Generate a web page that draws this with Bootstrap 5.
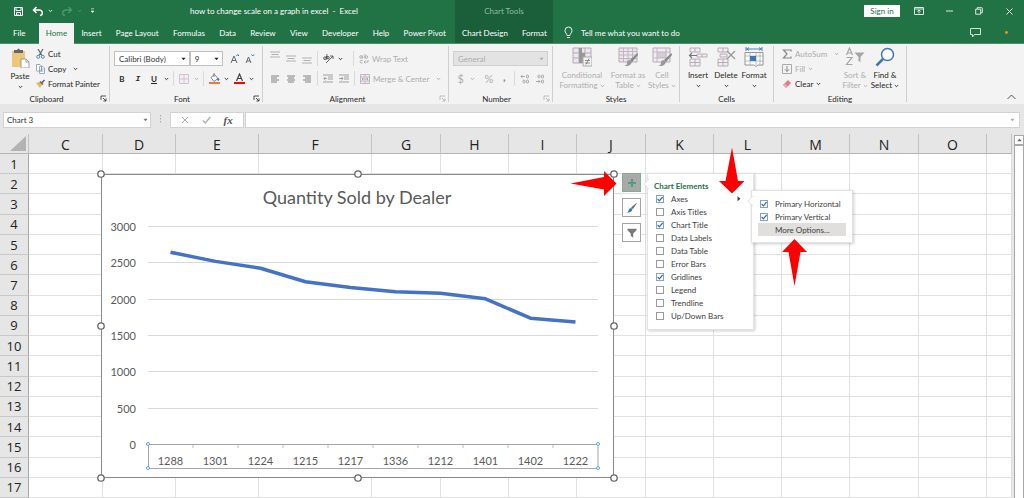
<!DOCTYPE html>
<html lang="en">
<head>
<meta charset="utf-8">
<meta name="viewport" content="width=device-width, initial-scale=1">
<title>how to change scale on a graph in excel - Excel</title>
<link href="https://cdn.jsdelivr.net/npm/bootstrap@5.3.0/dist/css/bootstrap.min.css" rel="stylesheet">
<style>
  :root { --green: #217346; --green-dark: #1b5e3a; --ribbon: #f3f3f3; --chrome: #e6e6e6; }
  body { font: 8px/10px Lato, "Open Sans", sans-serif; color: #262626; background: var(--chrome); overflow: hidden; }
  button { font: inherit; color: inherit; background: none; border: 0; padding: 0; display: inline-flex; align-items: center; justify-content: center; white-space: nowrap; }
  svg { flex: none; display: block; }

  .titlebar { height: 22px; background: var(--green); color: #fff; }
  .title-left { width: 190px; padding-left: 12px; }
  .ctx { background: var(--green-dark); width: 98px; }
  .ctx-name { color: #8fbfa3; }
  .tabs { height: 22px; background: var(--green); color: #fff; border-bottom: 1px solid #4e9069; }
  .main-tabs { width: 455px; padding-right: 2px; }
  .tabs a { color: #fff; text-decoration: none; line-height: 22px; padding: 0 7px; white-space: nowrap; }
  .tabs a.current { background: var(--ribbon); color: var(--green); height: 22px; margin-top: 1px; line-height: 20px; }
  .tabs .file-tab { padding: 0 13px; }
  .signin { background: #fff; color: var(--green); width: 36px; height: 12px; }
  .winbtn { width: 30px; height: 20px; }

  .ribbon { height: 60px; background: var(--ribbon); }
  .group { border-right: 1px solid #cfcfcf; margin-top: 2px; height: 56px; position: relative; flex: none; }
  .group-name { height: 10px; text-align: center; position: relative; }
  .group-body { height: 48px; }
  .launch { position: absolute; right: 2px; bottom: 0; }
  .ic { width: 16px; height: 15px; }
  .ch { width: 9px; height: 15px; }
  .glyph { font-size: 11px; }
  .fxlabel { font: italic bold 11px/12px "Liberation Serif", serif; color: #555; }
  .line15 { height: 15px; gap: 3px; }
  .wide { gap: 3px; padding-left: 3px; }
  .tworow { padding-top: 5px; gap: 5px; }
  .tworow > div { height: 15px; }
  .off { color: #adadad; }
  .big { flex-direction: column; justify-content: flex-start; }
  .big svg.bigicon { margin: 1px 0 3px; }
  .combo { border: 1px solid #c0c0c0; background: #fff; height: 15px; padding: 0 3px; min-width: 0; }
  .combo input, .namebox input { border: 0; background: none; padding: 0 0 0 1px; width: 100%; min-width: 0; font: inherit; color: #333; outline: 0; }
  .combo.gray { background: #e3e3e3; border-color: #d0d0d0; }
  .combo.gray input { color: #adadad; }
  .vsep { width: 1px; height: 15px; background: #dadada; margin: 0 2px; }

  .formula { height: 30px; padding: 8px 4px 7px 3px; }
  .white { background: #fff; border: 1px solid #d2d2d2; height: 16px; }
  .namebox { width: 148px; padding: 0 2px; }
  .fxbar { width: 74px; }

  .app { height: 100vh; }
  .sheetwrap { min-height: 0; position: relative; }
  .sheet { width: 1010px; height: 100%; table-layout: fixed; border-collapse: separate; border-spacing: 0; background: #fff; font: 13px/16px "Open Sans", sans-serif; color: #222; }
  .sheet th { background: var(--chrome); font-weight: 400; text-align: center; padding: 0; border-right: 1px solid #c3c3c3; border-bottom: 1px solid #b5b5b5; }
  .sheet thead th { height: 20px; font-size: 14px; padding-top: 2px; }
  .sheet tbody th { border-right-color: #a8a8a8; border-bottom-color: #c8c8c8; }
  .sheet td { padding: 0; border-right: 1px solid #e0e0e0; border-bottom: 1px solid #e0e0e0; }
  .scroll { width: 14px; padding: 1px 2px 0; }
  .scroll .btn-up { width: 10px; height: 10px; background: #fff; border: 1px solid #a8a8a8; }
  .scroll .thumb { background: #fff; border: 1px solid #a8a8a8; border-bottom: 0; width: 10px; }

  .chart { position: absolute; left: 95px; top: 34px; }
  .chart text { font-family: Lato, sans-serif; fill: #595959; }
  .chart-tools { position: absolute; left: 622px; top: 39px; gap: 6px; }
  .chart-tools button { width: 19px; height: 19px; background: #fff; border: 1px solid #a3a3a3; }
  .chart-tools button.pressed { background: #a9a9a9; border-color: #79b191; }
  .flyout { position: absolute; background: #fff; border: 1px solid #e2e2e2; box-shadow: 1px 1px 3px rgba(0,0,0,.2); margin: 0; }
  .flyout.elements { left: 647px; top: 39px; width: 107px; height: 157px; padding: 6px 8px 0 6px; }
  .flyout.axes { left: 751px; top: 56px; width: 102px; height: 53px; padding: 6px 5px 0 6px; }
  .flyout h2 { font: bold 8px/12px Lato, sans-serif; color: var(--green); margin: 0; }
  .flyout label { display: flex; align-items: center; height: 13px; padding-left: 2px; color: #404040; }
  .flyout input { appearance: none; width: 8px; height: 8px; border: 1px solid #9a9a9a; margin: 0 7px 0 0; background: #fff; flex: none; }
  .flyout input:checked { background: #fff url("data:image/svg+xml,%3Csvg xmlns='http://www.w3.org/2000/svg' viewBox='0 0 5 5'%3E%3Cpath d='M.5 2.5 2 4 4.7.8' fill='none' stroke='%232f6fb5'/%3E%3C/svg%3E"); border-color: #8aa3bd; }
  .flyout .more { display: flex; height: 13px; width: 88px; background: #e1dfdd; color: #404040; padding-left: 17px; justify-content: flex-start; }
  .notch { position: absolute; left: -5px; }
  .pointer { position: absolute; }
</style>
</head>
<body>
<svg width="0" height="0" class="position-absolute" aria-hidden="true">
  <symbol id="chev" viewBox="0 0 5 4"><path d="M.8 1 2.5 2.7 4.2 1" fill="none" stroke="currentColor" stroke-width=".9"/></symbol>
  <symbol id="tri" viewBox="0 0 5 4"><path d="M.4.8h4.2L2.5 3.2z" fill="currentColor"/></symbol>
  <symbol id="launcher" viewBox="0 0 7 7"><path d="M1 5V1h5M3 3l3 3M6 3.4V6H3.4" fill="none" stroke="currentColor" stroke-width=".8"/></symbol>
  <symbol id="al" viewBox="0 0 10 8"><path d="M1 1h8M1 3h6M1 5h8M1 7h6" stroke="currentColor" stroke-width=".9"/></symbol>
  <symbol id="ac" viewBox="0 0 10 8"><path d="M1 1h8M2 3h6M1 5h8M2 7h6" stroke="currentColor" stroke-width=".9"/></symbol>
  <symbol id="ar" viewBox="0 0 10 8"><path d="M1 1h8M3 3h6M1 5h8M3 7h6" stroke="currentColor" stroke-width=".9"/></symbol>
  <symbol id="bars3" viewBox="0 0 10 7"><path d="M0 1h10M1.5 3.5h7M0 6h10" stroke="currentColor" stroke-width=".9"/></symbol>
</svg>

<div class="app d-flex flex-column">
<header>
  <div class="titlebar d-flex align-items-center">
    <div class="title-left d-flex align-items-center">
      <button aria-label="Save"><svg width="12" height="11" viewBox="0 0 12 11"><path d="M2.5 1.5h8v8h-8zM4 1.5v3h5v-3M4.5 9.5v-3h4v3M6 8v1.5" fill="none" stroke="#fff"/></svg></button>
      <button class="ms-2" aria-label="Undo"><svg width="12" height="11" viewBox="0 0 12 11"><path d="M4.5 1 1.5 4l3 3M2 4h5c4 0 4.500 5 1 5.500" fill="none" stroke="#fff" stroke-width="1.5"/></svg></button>
      <button class="ms-1" aria-label="Undo list"><svg width="5" height="4"><use href="#chev"/></svg></button>
      <button class="ms-2" aria-label="Redo"><svg width="12" height="11" viewBox="0 0 12 11"><path d="M7.5 1l3 3-3 3M10 4H5c-4 0-4.500 5-1 5.500" fill="none" stroke="#4f9671" stroke-width="1.3"/></svg></button>
      <button class="ms-1" aria-label="Redo list" style="color:#4f9671"><svg width="5" height="4"><use href="#chev"/></svg></button>
      <button class="ms-2" aria-label="Customize"><svg width="5" height="6" viewBox="0 0 5 6"><path d="M1 .8h3M1.2 3h2.600L2.5 4.600z" fill="#fff" stroke="#fff" stroke-width=".6"/></svg></button>
    </div>
    <div class="flex-grow-1 text-nowrap" style="max-width:265px">how to change scale on a graph in excel &nbsp;-&nbsp; Excel</div>
    <div class="ctx align-self-stretch d-flex align-items-center justify-content-center"><span class="ctx-name">Chart Tools</span></div>
    <div class="ms-auto d-flex align-items-center">
      <button class="signin me-1">Sign in</button>
      <button class="winbtn" aria-label="Ribbon display options"><svg width="10" height="8" viewBox="0 0 10 8"><path d="M.5.5h9v7h-9zM.5 2h9M5 6.5V3M3.3 4.5 5 3l1.700 1.500" fill="none" stroke="#dcebe2"/></svg></button>
      <button class="winbtn" aria-label="Minimize"><svg width="7" height="2"><path d="M0 1h7" stroke="#dcebe2"/></svg></button>
      <button class="winbtn" aria-label="Restore"><svg width="8" height="8" viewBox="0 0 8 8"><path d="M.7 2.2h5v5h-5zM2.2 2V.7h4.600q.5 0 .5.500v4.500H6" fill="none" stroke="#dcebe2"/></svg></button>
      <button class="winbtn" aria-label="Close"><svg width="7" height="7" viewBox="0 0 7 7"><path d="m.5.5 6 6m0-6-6 6" stroke="#fff" stroke-width=".9"/></svg></button>
    </div>
  </div>
  <nav class="tabs d-flex">
    <div class="main-tabs d-flex justify-content-between">
      <a href="#" class="file-tab">File</a><a href="#" class="current">Home</a><a href="#">Insert</a><a href="#">Page Layout</a><a href="#">Formulas</a><a href="#">Data</a><a href="#">Review</a><a href="#">View</a><a href="#">Developer</a><a href="#">Help</a><a href="#">Power Pivot</a>
    </div>
    <div class="ctx d-flex justify-content-between"><a href="#">Chart Design</a><a href="#">Format</a></div>
    <a href="#" class="d-flex align-items-center ms-1 gap-2"><svg width="9" height="13" viewBox="0 0 9 13"><path d="M3 9.500C3 7.500 1 7 1 4.500a3.500 3.500 0 0 1 7 0C8 7 6 7.500 6 9.500zM3 11.500h3" fill="none" stroke="#fff" stroke-width=".9"/></svg>Tell me what you want to do</a>
    <div class="ms-auto d-flex align-items-center">
      <button aria-label="Comments"><svg width="11" height="10" viewBox="0 0 11 10"><path d="M.5.5h10v6H4.500l-2 2.500V6.500h-2z" fill="none" stroke="#e8f2ec" stroke-width=".9"/></svg></button>
      <svg class="ms-4 me-3" width="3" height="3" viewBox="0 0 3 3"><circle cx="1.5" cy="1.5" r="1.4" fill="#f7940a"/></svg>
    </div>
  </nav>
  <div class="ribbon d-flex">
    <section class="group" style="width:110px">
      <div class="group-body d-flex">
        <button class="big ms-2" style="width:24px"><svg class="bigicon" width="20" height="21" viewBox="0 0 20 21"><path d="M2 4h13v16H2z" fill="#ecc67a"/><path d="M4 3h3q1.500-3 3 0h3v3H4z" fill="#666"/><path d="M11 12h5l3 3v6h-8z" fill="#fff" stroke="#888" stroke-width=".8"/><path d="M16 12v3h3" fill="none" stroke="#888" stroke-width=".7"/></svg>Paste<svg class="mt-1" width="5" height="4"><use href="#chev"/></svg></button>
        <div class="ms-1">
          <button class="line15 d-flex"><svg width="9" height="10" viewBox="0 0 9 10"><path d="m2 0 4 6.500M7 0 3 6.500" stroke="#666" stroke-width="1.2"/><circle cx="2.2" cy="7.8" r="1.5" fill="none" stroke="#4f86c0"/><circle cx="6.8" cy="7.8" r="1.5" fill="none" stroke="#4f86c0"/></svg>Cut</button>
          <button class="line15 d-flex"><svg width="9" height="10" viewBox="0 0 9 10"><path d="M.5.5h3.500l1.500 1.500v5h-5zM3.500 2.500H7L8.500 4v5.500h-5z" fill="#fff" stroke="#7d95b3" stroke-width=".8"/><path d="M4.500 5h3m-3 2h3" stroke="#4f86c0" stroke-width=".7"/></svg>Copy<svg class="ms-1" width="5" height="4"><use href="#chev"/></svg></button>
          <button class="line15 d-flex"><svg width="9" height="10" viewBox="0 0 9 10"><path d="m0 4 4-1 2 3-2 3z" fill="#ecb45f"/><path d="m4 2.500 3 3M5.500 4 8.500 1" stroke="#666" stroke-width="1.6"/></svg>Format Painter</button>
        </div>
      </div>
      <div class="group-name me-3">Clipboard</div><svg class="launch" width="7" height="7"><use href="#launcher"/></svg>
    </section>
    <section class="group" style="width:153px">
      <div class="group-body tworow d-flex flex-column px-1">
        <div class="d-flex">
          <div class="combo d-flex align-items-center" style="width:78px"><input aria-label="Font" value="Calibri (Body)"><svg width="5" height="4"><use href="#tri"/></svg></div>
          <div class="combo d-flex align-items-center" style="width:34px"><input aria-label="Font size" value="9"><svg width="5" height="4"><use href="#tri"/></svg></div>
          <button class="ic ms-1" aria-label="Grow font"><svg width="10" height="10" viewBox="0 0 10 10"><path d="m1 9 3-7 3 7M2 6.500h4" fill="none" stroke="#666"/><path d="m6.500 2 1.300-1.500L9 2" fill="none" stroke="#2f6fb5"/></svg></button>
          <button class="ic" aria-label="Shrink font"><svg width="10" height="10" viewBox="0 0 10 10"><path d="m1 9 2.500-6L6 9M2 7h3" fill="none" stroke="#666"/><path d="M6.500.5 7.800 2 9 .5" fill="none" stroke="#2f6fb5"/></svg></button>
        </div>
        <div class="d-flex align-items-center">
          <button class="ic fw-bold">B</button><button class="ic fst-italic fw-bold font-monospace">I</button><button class="ic fw-bold text-decoration-underline">U</button>
          <button class="ch" aria-label="Underline style"><svg width="5" height="4"><use href="#chev"/></svg></button>
          <span class="vsep"></span>
          <button class="ic" aria-label="Borders"><svg width="10" height="10" viewBox="0 0 10 10"><path d="M.5.5h9v9h-9zM5 .5v9M.5 5h9" fill="#f6eef6" stroke="#c9bac9" stroke-width=".8"/></svg></button>
          <button class="ch off" aria-label="Border style"><svg width="5" height="4"><use href="#chev"/></svg></button>
          <span class="vsep"></span>
          <button class="ic" aria-label="Fill color"><svg width="11" height="11" viewBox="0 0 11 11"><path d="m2 4.500 3.500-3 3.500 4L5 8.500zM5 0v4" fill="#fff" stroke="#666" stroke-width=".8"/><path d="M9 5q2 2 .5 2.500T9 5" fill="#2f6fb5" stroke="#2f6fb5" stroke-width=".6"/><path d="M0 9h11v2H0z" fill="#ed7d31"/></svg></button>
          <button class="ch" aria-label="Fill palette"><svg width="5" height="4"><use href="#chev"/></svg></button>
          <button class="ic" aria-label="Font color"><svg width="11" height="11" viewBox="0 0 11 11"><path d="m2.500 8 3-7 3 7M3.500 5.500h4" fill="none" stroke="#444" stroke-width="1.2"/><path d="M0 9h11v2H0z" fill="#f00"/></svg></button>
          <button class="ch" aria-label="Font palette"><svg width="5" height="4"><use href="#chev"/></svg></button>
        </div>
      </div>
      <div class="group-name me-2">Font</div><svg class="launch" width="7" height="7"><use href="#launcher"/></svg>
    </section>
    <section class="group" style="width:186px">
      <div class="group-body tworow d-flex flex-column ps-1">
        <div class="d-flex align-items-center">
          <button class="ic pb-2" style="color:#aaa" aria-label="Top align"><svg width="10" height="7"><use href="#bars3"/></svg></button>
          <button class="ic" style="color:#aaa" aria-label="Middle align"><svg width="10" height="7"><use href="#bars3"/></svg></button>
          <button class="ic pt-1" style="color:#aaa" aria-label="Bottom align"><svg width="10" height="7"><use href="#bars3"/></svg></button>
          <span class="vsep"></span>
          <button class="ic" aria-label="Orientation"><svg width="11" height="10" viewBox="0 0 11 10"><path d="M3 9 10 2M10 5V2H7" fill="none" stroke="#555" stroke-width=".9"/><circle cx="2" cy="4.2" r="1.3" fill="none" stroke="#444" stroke-width=".9"/><circle cx="5" cy="3.7" r="1.2" fill="none" stroke="#444" stroke-width=".9"/><path d="M3.500 2v3.500M3.900 0v4" stroke="#444" stroke-width=".8"/></svg></button>
          <button class="ch" aria-label="Orientation list"><svg width="5" height="4"><use href="#chev"/></svg></button>
          <span class="vsep ms-2"></span>
          <button class="off wide"><svg width="10" height="10" viewBox="0 0 10 10"><g fill="none" stroke="#aaa" stroke-width=".9"><circle cx="2" cy="3" r="1.3"/><path d="M3.700 1.500v3M6 0v4.500"/><circle cx="7.3" cy="3" r="1.3"/><path d="M3.500 6.500q-2.500-.5-2.500 1.200t2.500 1.200M9 6v2H5m1.500-1.500L5 8l1.500 1.500"/></g></svg>Wrap Text</button>
        </div>
        <div class="d-flex align-items-center">
          <button class="ic" style="color:#777" aria-label="Align left"><svg width="10" height="8"><use href="#al"/></svg></button>
          <button class="ic" style="color:#777" aria-label="Center"><svg width="10" height="8"><use href="#ac"/></svg></button>
          <button class="ic" style="color:#777" aria-label="Align right"><svg width="10" height="8"><use href="#ar"/></svg></button>
          <span class="vsep"></span>
          <button class="ic" aria-label="Decrease indent"><svg width="10" height="9" viewBox="0 0 10 9"><path d="M0 1h10M5 3h5M5 5h5M0 8h10M4 4.500H1M2.500 2.800.8 4.500l1.700 1.700" fill="none" stroke="#999" stroke-width=".9"/></svg></button>
          <button class="ic" aria-label="Increase indent"><svg width="10" height="9" viewBox="0 0 10 9"><path d="M0 1h10M5 3h5M5 5h5M0 8h10M0 4.500h4M2.300 2.800 4 4.500 2.300 6.200" fill="none" stroke="#999" stroke-width=".9"/></svg></button>
          <span class="vsep"></span>
          <button class="off wide"><svg width="10" height="10" viewBox="0 0 10 10"><path d="M.5.5h9v9h-9zM.5 3h9M.5 7h9M5 .5V3M5 7v2.500" fill="#f4edf4" stroke="#b5a8b5" stroke-width=".8"/><path d="M2 5h6M3.200 3.900 2 5l1.200 1.100M6.800 3.900 8 5 6.800 6.100" fill="none" stroke="#999" stroke-width=".8"/></svg>Merge &amp; Center<svg class="ms-1" width="5" height="4"><use href="#chev"/></svg></button>
        </div>
      </div>
      <div class="group-name me-3">Alignment</div><svg class="launch off" width="7" height="7"><use href="#launcher"/></svg>
    </section>
    <section class="group" style="width:104px">
      <div class="group-body tworow d-flex flex-column px-1">
        <div class="combo gray d-flex align-items-center"><input aria-label="Number format" value="General" disabled><svg class="off" width="5" height="4"><use href="#tri"/></svg></div>
        <div class="d-flex align-items-center off">
          <button class="ic glyph">$</button><button class="ch" aria-label="Currency list"><svg width="5" height="4"><use href="#chev"/></svg></button>
          <button class="ic ms-1 glyph">%</button><button class="ic fw-bold glyph pb-1" style="color:#888">,</button>
          <span class="vsep"></span>
          <button class="ic" aria-label="Increase decimal"><svg width="10" height="10" viewBox="0 0 10 10"><g fill="none" stroke="#999" stroke-width=".8"><path d="M5 2.500H1M2.500 1 1 2.500 2.500 4"/><rect x="6.5" y="1" width="2" height="3" rx="1"/><rect x="3" y="6" width="2" height="3" rx="1"/><rect x="6.5" y="6" width="2" height="3" rx="1"/></g></svg></button>
          <button class="ic" aria-label="Decrease decimal"><svg width="10" height="10" viewBox="0 0 10 10"><g fill="none" stroke="#999" stroke-width=".8"><path d="M1 7.500h4M3.500 6 5 7.500 3.500 9"/><rect x="3" y="1" width="2" height="3" rx="1"/><rect x="6.5" y="1" width="2" height="3" rx="1"/><rect x="6.5" y="6" width="2" height="3" rx="1"/></g></svg></button>
        </div>
      </div>
      <div class="group-name me-2">Number</div><svg class="launch off" width="7" height="7"><use href="#launcher"/></svg>
    </section>
    <section class="group" style="width:127px">
      <div class="group-body d-flex off">
        <button class="big" style="width:58px"><svg class="bigicon" width="20" height="20" viewBox="0 0 20 20"><path d="M1 1h18v15H1z" fill="#eee6ee" stroke="#b5acb5"/><path d="M1 6h18M1 11h18M7 1v15M13 1v15" stroke="#b5acb5"/><path d="M7 1h3v5H7zM7 6h6v5H7zM7 11h4v5H7z" fill="#999"/><path d="M11 10h9v9h-9z" fill="#f3f3f3" stroke="#aaa"/><path d="M13 13.500h5m-5 2.500h5m-1-4.500-3 6" stroke="#777" stroke-width=".8"/></svg>Conditional<span>Formatting <svg class="d-inline" width="5" height="4"><use href="#chev"/></svg></span></button>
        <button class="big" style="width:34px"><svg class="bigicon" width="20" height="20" viewBox="0 0 20 20"><path d="M1 1h18v14H1z" fill="#eee6ee" stroke="#b5acb5"/><path d="M1 4.500h18M1 8h18M1 11.500h18M5.500 1v14M10 1v14M14.500 1v14" stroke="#c0b6c0"/><path d="M19.500 6 12 13l2 2 6-7z" fill="#888"/><path d="M12 13q-3 0-3 3t-3 2.500q6 2 8-3.500z" fill="#999"/></svg>Format as<span>Table <svg class="d-inline" width="5" height="4"><use href="#chev"/></svg></span></button>
        <button class="big" style="width:34px"><svg class="bigicon" width="20" height="20" viewBox="0 0 20 20"><path d="M1 1h17v14H1z" fill="#f3ecf3" stroke="#b5acb5"/><path d="M5 5h9v6H5z" fill="#d5ccd5"/><path d="M1 5h17M1 11h17M5 1v14M14 1v14" stroke="#c0b6c0"/><path d="M19.500 6 12 13l2 2 6-7z" fill="#888"/><path d="M12 13q-3 0-3 3t-3 2.500q6 2 8-3.500z" fill="#999"/></svg>Cell<span>Styles <svg class="d-inline" width="5" height="4"><use href="#chev"/></svg></span></button>
      </div>
      <div class="group-name">Styles</div>
    </section>
    <section class="group" style="width:94px">
      <div class="group-body d-flex ps-1">
        <button class="big" style="width:28px"><svg class="bigicon" width="20" height="20" viewBox="0 0 20 20"><path d="M2 1h10v4H2zM7 1v4M2 12h10v7H2zM7 12v7M2 15.500h10M9 7h10v3H9zM14 7v3" fill="#f3ecf3" stroke="#b0a8b0" stroke-width=".9"/><path d="M9 8.500H1.500M4 6 1.500 8.500 4 11" fill="none" stroke="#777" stroke-width="1.2"/></svg>Insert<svg class="mt-1" width="5" height="4"><use href="#chev"/></svg></button>
        <button class="big" style="width:28px"><svg class="bigicon" width="20" height="20" viewBox="0 0 20 20"><path d="M2 1h10v4H2zM7 1v4M2 12h10v7H2zM7 12v7M2 15.500h10M4 7h7v3H4z" fill="#f3ecf3" stroke="#b0a8b0" stroke-width=".9"/><path d="m11 4 8 8m0-8-8 8" stroke="#999" stroke-width="1.4"/></svg>Delete<svg class="mt-1" width="5" height="4"><use href="#chev"/></svg></button>
        <button class="big" style="width:28px"><svg class="bigicon" width="20" height="20" viewBox="0 0 20 20"><path d="M1 5.500h18V18H14l-2 1.500L10 18H1z" fill="#fff" stroke="#888" stroke-width=".9"/><path d="M1 9h18M1 14h18M6 5.500V18M12 5.500V18M16 5.500V18" stroke="#aaa" stroke-width=".8"/><path d="M6 9h6v5H6z" fill="#3a78b8"/><path d="M2 2h16M2 0v4M18 0v4M5 .5 3 2l2 1.500M15 .5 17 2l-2 1.500" fill="none" stroke="#3a78b8" stroke-width=".9"/></svg>Format<svg class="mt-1" width="5" height="4"><use href="#chev"/></svg></button>
      </div>
      <div class="group-name">Cells</div>
    </section>
    <section class="group" style="width:133px">
      <div class="group-body d-flex ps-2">
        <div style="width:58px">
          <button class="line15 d-flex off"><svg width="10" height="10" viewBox="0 0 10 10"><path d="M9 2.500V1H1.500L5 5 1.500 9H9V7.500" fill="none" stroke="#888" stroke-width="1.2"/></svg>AutoSum<svg class="ms-1" width="5" height="4"><use href="#chev"/></svg></button>
          <button class="line15 d-flex off"><svg width="10" height="10" viewBox="0 0 10 10"><path d="M.5.5h9v9h-9z" fill="none" stroke="#aaa"/><path d="M5 2v5.500M2.800 5.300 5 7.500l2.200-2.200" fill="none" stroke="#888"/></svg>Fill<svg width="5" height="4"><use href="#chev"/></svg></button>
          <button class="line15 d-flex"><svg width="10" height="10" viewBox="0 0 10 10"><path d="m1 6 5-5 3 3-5 5z" fill="#e8788f"/><path d="m1 6 1.500-1.500 3 3L4 9z" fill="#f2a9b8"/></svg>Clear<svg width="5" height="4"><use href="#chev"/></svg></button>
        </div>
        <button class="big off" style="width:30px"><svg class="bigicon" width="20" height="20" viewBox="0 0 20 20"><path d="m1.500 8 3-7 3 7M2.500 6h4M1.500 10.500h5.500l-5.500 7h6" fill="none" stroke="#a5a5a5" stroke-width="1.2"/><path d="M9.500 5.500h10l-4 4.500v5l-2-1v-4z" fill="#a5a5a5"/></svg>Sort &amp;<span>Filter <svg class="d-inline" width="5" height="4"><use href="#chev"/></svg></span></button>
        <button class="big" style="width:30px"><svg class="bigicon" width="20" height="20" viewBox="0 0 20 20"><circle cx="12.500" cy="7.500" r="6" fill="#fff" stroke="#3a78b8" stroke-width="1.500"/><path d="m8 12-6.500 6.500" stroke="#3a78b8" stroke-width="2.500"/></svg>Find &amp;<span>Select <svg class="d-inline" width="5" height="4"><use href="#chev"/></svg></span></button>
      </div>
      <div class="group-name">Editing</div>
    </section>
    <button class="ms-auto align-self-end me-2 mb-1" aria-label="Collapse ribbon"><svg width="9" height="6" viewBox="0 0 9 6"><path d="M.5 5 4.500 1l4 4" fill="none" stroke="#555"/></svg></button>
  </div>
  <div class="formula d-flex align-items-center">
    <div class="white namebox d-flex align-items-center"><input aria-label="Name box" value="Chart 3"><svg width="5" height="4" color="#777"><use href="#tri"/></svg></div>
    <svg class="mx-2" width="3" height="9" viewBox="0 0 3 9"><path d="M1.500 0v9" stroke="#aaa" stroke-dasharray="1.500 1.500"/></svg>
    <div class="white fxbar d-flex align-items-center justify-content-around px-1">
      <button aria-label="Cancel"><svg width="8" height="8" viewBox="0 0 8 8"><path d="m1 1 6 6m0-6L1 7" stroke="#b0b0b0"/></svg></button>
      <button aria-label="Enter"><svg width="9" height="8" viewBox="0 0 9 8"><path d="m.8 4.500 2.500 2.500L8.300 1" fill="none" stroke="#b0b0b0" stroke-width="1.4"/></svg></button>
      <button class="fxlabel">fx</button>
    </div>
    <div class="white flex-grow-1 d-flex align-items-center justify-content-end pe-1" style="margin-left:1px"><svg width="5" height="4" color="#aaa"><use href="#tri"/></svg></div>
  </div>
</header>

<main class="sheetwrap flex-grow-1 d-flex">
  <table class="sheet" id="sheet"><colgroup></colgroup><thead><tr></tr></thead><tbody></tbody></table>
  <div class="scroll d-flex flex-column flex-grow-1">
    <button class="btn-up" aria-label="Scroll up"><svg width="5" height="4" viewBox="0 0 5 4"><path d="M.3 3.200h4.400L2.500.6z" fill="#666"/></svg></button>
    <div class="thumb flex-grow-1"></div>
  </div>

  <svg class="chart" id="chart" width="526" height="316" viewBox="95 168 526 316" role="img" aria-label="Quantity Sold by Dealer">
    <rect x="101.500" y="174.500" width="512" height="303" fill="#fff" stroke="#8a8a8a"/>
    <text x="357" y="204" font-size="18" text-anchor="middle">Quantity Sold by Dealer</text>
    <g id="grid"></g>
    <polyline id="series" fill="none" stroke="#4472c4" stroke-width="3.500" stroke-linejoin="round"/>
    <g id="handles"></g>
  </svg>

  <div class="chart-tools d-flex flex-column">
    <button class="pressed" aria-label="Chart Elements"><svg width="8" height="8" viewBox="0 0 8 8"><path d="M4 0v8M0 4h8" stroke="#4f9f7c" stroke-width="2"/></svg></button>
    <button aria-label="Chart Styles"><svg width="11" height="10" viewBox="0 0 11 10"><path d="M10.500.3 5.500 4.500l1.300 1.300z" fill="#666" stroke="#666" stroke-width=".6"/><path d="M5.300 5Q3 5 2.700 7T.5 9.500Q6 10 6.300 6z" fill="#3a78b8"/></svg></button>
    <button aria-label="Chart Filters"><svg width="10" height="10" viewBox="0 0 10 10"><path d="M.5.8h9v1.400L6.200 5.500v4L3.800 8V5.500L.5 2.200z" fill="#777"/></svg></button>
  </div>

  <form class="flyout elements">
    <svg class="notch" style="top:5px" width="6" height="10" viewBox="0 0 6 10"><path d="M6 0 .8 5 6 10" fill="#fff" stroke="#e2e2e2"/></svg>
    <h2>Chart Elements</h2>
    <div class="position-relative"><label><input type="checkbox" checked>Axes</label><svg class="position-absolute top-0 end-0 mt-1 me-1" width="4" height="6" viewBox="0 0 4 6"><path d="M.5.3v5L3.500 2.800z" fill="#444"/></svg></div>
    <label><input type="checkbox">Axis Titles</label>
    <label><input type="checkbox" checked>Chart Title</label>
    <label><input type="checkbox">Data Labels</label>
    <label><input type="checkbox">Data Table</label>
    <label><input type="checkbox">Error Bars</label>
    <label><input type="checkbox" checked>Gridlines</label>
    <label><input type="checkbox">Legend</label>
    <label><input type="checkbox">Trendline</label>
    <label><input type="checkbox">Up/Down Bars</label>
  </form>
  <form class="flyout axes">
    <svg class="notch" style="top:5px" width="6" height="10" viewBox="0 0 6 10"><path d="M6 0 .8 5 6 10" fill="#fff" stroke="#e2e2e2"/></svg>
    <label><input type="checkbox" checked>Primary Horizontal</label>
    <label><input type="checkbox" checked>Primary Vertical</label>
    <button type="button" class="more">More Options...</button>
  </form>

  <svg class="pointer" style="left:570px;top:36px" width="47" height="30" viewBox="570 170 47 30"><path d="M570.500 183.500 604 177v-6l12.500 12.500L604 196v-6.500z" fill="#f00"/></svg>
  <svg class="pointer" style="left:718px;top:13px" width="28" height="48" viewBox="718 147 28 48"><path d="m732 147.500 6 33.500h6.500L732 193.500 719 181h6.500z" fill="#f00"/></svg>
  <svg class="pointer" style="left:780px;top:104px" width="30" height="50" viewBox="780 238 30 50"><path d="m794.500 239 12.500 13h-6.500l-6 34-6-34H782z" fill="#f00"/></svg>
</main>
</div>

<script>
  // Worksheet: visible columns with their widths, then seventeen rows
  const columns = [['', 29], ['C', 74], ['D', 73], ['E', 83], ['F', 113], ['G', 69], ['H', 68], ['I', 68], ['J', 69], ['K', 68], ['L', 68], ['M', 68], ['N', 69], ['O', 68], ['', 25]];
  const sheet = document.getElementById('sheet');
  sheet.querySelector('colgroup').innerHTML = columns.map(c => `<col style="width:${c[1]}px">`).join('');
  sheet.querySelector('thead tr').innerHTML = columns.map((c, i) => i ? `<th scope="col">${c[0]}</th>`
    : '<th class="p-0"><svg class="ms-auto" width="18" height="17"><path d="M16 1v15H0z" fill="#b3b3b3"/></svg></th>').join('');
  sheet.querySelector('tbody').innerHTML = Array.from({ length: 17 }, (_, r) =>
    `<tr><th scope="row">${r + 1}</th>${'<td></td>'.repeat(columns.length - 1)}</tr>`).join('');

  // Line chart
  const left = 148, right = 598, top0 = 226, bottom = 444, max = 3000;
  const dealers = [1288, 1301, 1224, 1215, 1217, 1336, 1212, 1401, 1402, 1222];
  const values = [2645, 2520, 2425, 2240, 2160, 2103, 2080, 2005, 1738, 1685];
  const y = v => bottom + .5 - v / max * (bottom - top0);
  const step = (right - left) / dealers.length;
  let g = '';
  for (let v = 0; v <= max; v += 500) {
    const yy = Math.round(y(v) - .5) + .5;
    g += `<path d="M${left} ${yy}H${right}" stroke="${v ? '#d9d9d9' : '#a6a6a6'}"/><text x="136" y="${yy + 4}" font-size="11" text-anchor="end">${v}</text>`;
  }
  dealers.forEach((d, i) => {
    g += `<text x="${left + step * (i + .5)}" y="465" font-size="11" text-anchor="middle">${d}</text>`;
    if (i) g += `<path d="M${left + step * i} 445v3" stroke="#bfbfbf"/>`;
  });
  g += `<path d="M${left + .5} 444.500V468.500H${right}V444.500" fill="none" stroke="#a6a6a6"/>`;
  document.getElementById('grid').innerHTML = g;
  document.getElementById('series').setAttribute('points', values.map((v, i) => `${left + step * (i + .5)},${y(v)}`).join(' '));
  let h = '';
  for (const [cx, cy] of [[101, 174], [358, 174], [614, 174], [101, 326], [614, 326], [101, 478], [358, 478], [614, 478]])
    h += `<circle cx="${cx}" cy="${cy}" r="3.200" fill="#fff" stroke="#666" stroke-width="1.300"/>`;
  for (const [cx, cy] of [[148, 444], [598, 444], [148, 468], [598, 468]])
    h += `<circle cx="${cx}" cy="${cy}" r="1.500" fill="#fff" stroke="#5aa5e0"/>`;
  document.getElementById('handles').innerHTML = h;
</script>
<script src="https://cdn.jsdelivr.net/npm/bootstrap@5.3.0/dist/js/bootstrap.bundle.min.js"></script>
</body>
</html>
